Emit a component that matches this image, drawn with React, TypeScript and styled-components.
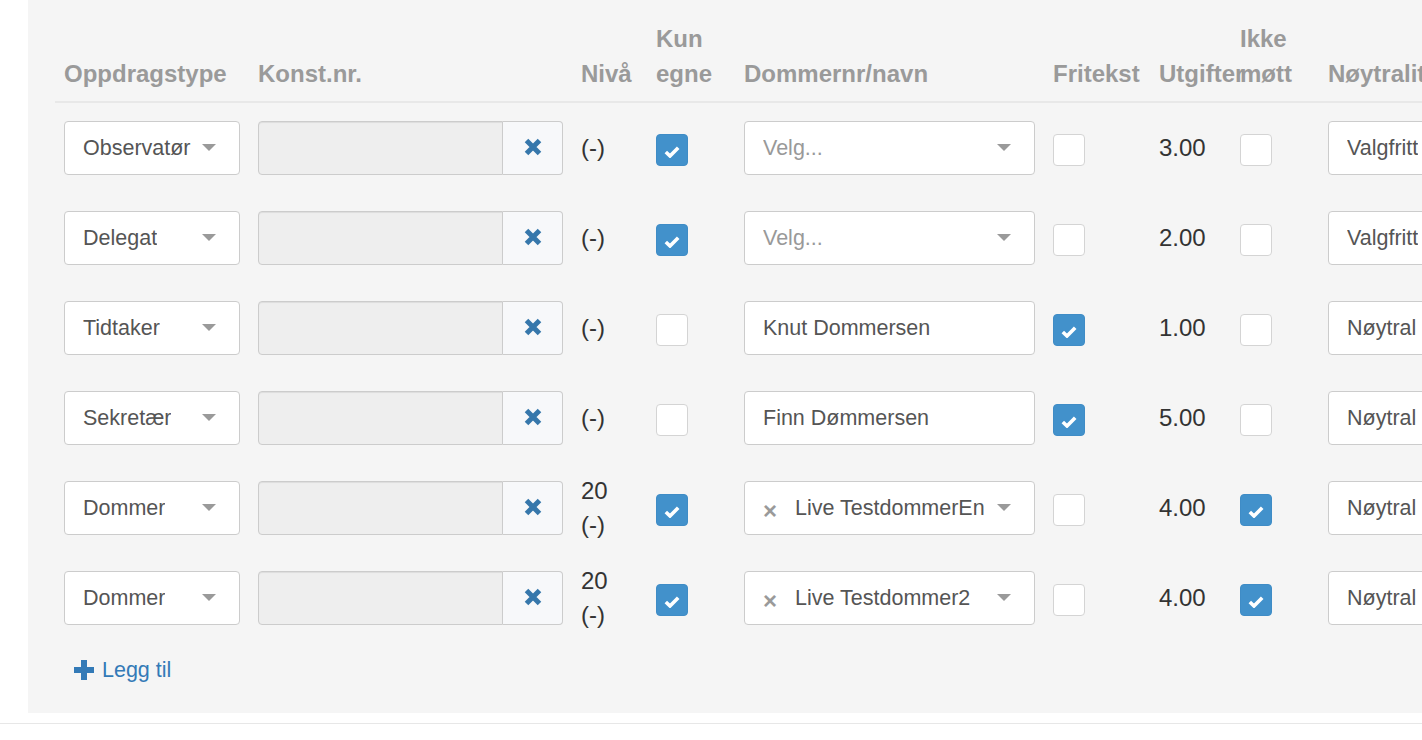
import React from "react";
import styled, { createGlobalStyle } from "styled-components";

const GlobalStyle = createGlobalStyle`
  html, body {
    margin: 0;
    padding: 0;
    background: #ffffff;
    overflow: hidden;
    font-family: "Liberation Sans", Arial, Helvetica, sans-serif;
  }
  * { box-sizing: border-box; }
`;

const Page = styled.div`
  display: flex;
  flex-direction: column;
`;

const PanelArea = styled.div`
  padding-left: 28px;
`;

const Panel = styled.div`
  background: #f5f5f5;
  padding: 11px 0 28px 27px;
  overflow: hidden;
`;

const Table = styled.table`
  border-collapse: separate;
  border-spacing: 0;
  table-layout: fixed;
  width: 1484px;
`;

const HeadCell = styled.th`
  text-align: left;
  vertical-align: bottom;
  padding: 10px 9px;
  font-size: 24px;
  font-weight: bold;
  line-height: 35px;
  color: #9a9a9a;
  border-bottom: 2px solid #e8e8e8;
  overflow: visible;
`;

const Cell = styled.td`
  padding: 18px 9px;
  vertical-align: middle;
  font-size: 24px;
  line-height: 34px;
  color: #333333;
  overflow: visible;
  white-space: nowrap;
`;

const SelectBox = styled.div`
  display: flex;
  align-items: center;
  height: 54px;
  width: 100%;
  border: 1px solid #cccccc;
  border-radius: 4px;
  background: #ffffff;
  padding: 0 23px 0 18px;
  font-size: 21.5px;
  color: #555555;
  white-space: nowrap;
  overflow: hidden;
`;

const SelectText = styled.span<{ $placeholder?: boolean }>`
  color: ${(p) => (p.$placeholder ? "#999999" : "#555555")};
  overflow: hidden;
  text-overflow: clip;
`;

const ClearMark = styled.span`
  color: #9a9a9a;
  font-weight: bold;
  font-size: 24px;
  margin-right: 18px;
  margin-top: 6px;
  line-height: 1;
`;

const Caret = styled.span`
  margin-left: auto;
  flex: none;
  width: 0;
  height: 0;
  border-left: 7px solid transparent;
  border-right: 7px solid transparent;
  border-top: 7px solid #9a9a9a;
  margin-top: -1px;
`;

const InputGroup = styled.div`
  display: flex;
  height: 54px;
  width: 100%;
`;

const GroupInput = styled.div`
  flex: 1;
  background: #eeeeee;
  border: 1px solid #cccccc;
  border-radius: 4px 0 0 4px;
  box-shadow: inset 0 1px 1px rgba(0, 0, 0, 0.075);
`;

const GroupButton = styled.div`
  width: 60px;
  flex: none;
  display: flex;
  align-items: center;
  justify-content: center;
  background: #f7f8fa;
  border: 1px solid #cccccc;
  border-left: none;
  border-radius: 0 4px 4px 0;
  padding-bottom: 3px;
`;

const CheckBox = styled.div<{ $checked: boolean }>`
  width: 32px;
  height: 32px;
  margin-top: 4px;
  border-radius: 4px;
  border: 1px solid ${(p) => (p.$checked ? "#3f8cc6" : "#d4d4d4")};
  background: ${(p) => (p.$checked ? "#4291cb" : "#ffffff")};
  display: flex;
  align-items: center;
  justify-content: center;
  padding-top: 3px;
`;

const LevelText = styled.div`
  height: 54px;
  display: flex;
  flex-direction: column;
  justify-content: center;
  overflow: visible;
`;

const AddButton = styled.button`
  align-self: flex-start;
  display: inline-flex;
  align-items: center;
  gap: 8px;
  margin: 12px 0 0 19px;
  padding: 0;
  border: none;
  background: none;
  font-family: "Liberation Sans", Arial, Helvetica, sans-serif;
  font-size: 21.5px;
  line-height: 30px;
  color: #337ab7;
  cursor: pointer;
`;

const Footer = styled.div`
  margin-top: 10px;
  border-top: 1px solid #e7e7e7;
  height: 40px;
`;

const RemoveIcon = () => (
  <svg width="18" height="18" viewBox="0 0 18 18">
    <path d="M2.5 2.5 L15.5 15.5 M15.5 2.5 L2.5 15.5" stroke="#3677ab" strokeWidth="5" strokeLinecap="butt" fill="none" />
  </svg>
);

const CheckIcon = () => (
  <svg width="16" height="12" viewBox="0 0 16 12">
    <path d="M1.8 6 L6 10 L14.2 1.8" stroke="#ffffff" strokeWidth="3.6" strokeLinecap="butt" strokeLinejoin="miter" fill="none" />
  </svg>
);

const PlusIcon = () => (
  <svg width="20" height="20" viewBox="0 0 20 20">
    <path d="M7 0 H13 V7 H20 V13 H13 V20 H7 V13 H0 V7 H7 Z" fill="#337ab7" />
  </svg>
);

type Judge = { kind: "empty" } | { kind: "text"; value: string } | { kind: "select"; value: string };

type Row = {
  type: string;
  level: string[];
  own: boolean;
  judge: Judge;
  free: boolean;
  cost: string;
  absent: boolean;
  neutral: string;
};

const rows: Row[] = [
  { type: "Observatør", level: ["(-)"], own: true, judge: { kind: "empty" }, free: false, cost: "3.00", absent: false, neutral: "Valgfritt" },
  { type: "Delegat", level: ["(-)"], own: true, judge: { kind: "empty" }, free: false, cost: "2.00", absent: false, neutral: "Valgfritt" },
  { type: "Tidtaker", level: ["(-)"], own: false, judge: { kind: "text", value: "Knut Dommersen" }, free: true, cost: "1.00", absent: false, neutral: "Nøytral" },
  { type: "Sekretær", level: ["(-)"], own: false, judge: { kind: "text", value: "Finn Dømmersen" }, free: true, cost: "5.00", absent: false, neutral: "Nøytral" },
  { type: "Dommer", level: ["20", "(-)"], own: true, judge: { kind: "select", value: "Live TestdommerEn" }, free: false, cost: "4.00", absent: true, neutral: "Nøytral" },
  { type: "Dommer", level: ["20", "(-)"], own: true, judge: { kind: "select", value: "Live Testdommer2" }, free: false, cost: "4.00", absent: true, neutral: "Nøytral" },
];

const colWidths = [194, 323, 75, 88, 309, 106, 81, 88, 220];

const Check = ({ checked }: { checked: boolean }) => (
  <CheckBox $checked={checked}>{checked && <CheckIcon />}</CheckBox>
);

const JudgeField = ({ judge }: { judge: Judge }) => {
  if (judge.kind === "text") {
    return (
      <SelectBox>
        <SelectText>{judge.value}</SelectText>
      </SelectBox>
    );
  }
  if (judge.kind === "select") {
    return (
      <SelectBox>
        <ClearMark>×</ClearMark>
        <SelectText>{judge.value}</SelectText>
        <Caret />
      </SelectBox>
    );
  }
  return (
    <SelectBox>
      <SelectText $placeholder>Velg...</SelectText>
      <Caret />
    </SelectBox>
  );
};

export default function App() {
  return (
    <>
      <GlobalStyle />
      <Page>
        <PanelArea>
          <Panel>
            <Table>
              <colgroup>
                {colWidths.map((w, i) => (
                  <col key={i} style={{ width: w }} />
                ))}
              </colgroup>
              <thead>
                <tr>
                  <HeadCell>Oppdragstype</HeadCell>
                  <HeadCell>Konst.nr.</HeadCell>
                  <HeadCell>Nivå</HeadCell>
                  <HeadCell>Kun egne</HeadCell>
                  <HeadCell>Dommernr/navn</HeadCell>
                  <HeadCell>Fritekst</HeadCell>
                  <HeadCell>Utgifter</HeadCell>
                  <HeadCell>Ikke møtt</HeadCell>
                  <HeadCell>Nøytralitet</HeadCell>
                </tr>
              </thead>
              <tbody>
                {rows.map((r, i) => (
                  <tr key={i}>
                    <Cell>
                      <SelectBox>
                        <SelectText>{r.type}</SelectText>
                        <Caret />
                      </SelectBox>
                    </Cell>
                    <Cell>
                      <InputGroup>
                        <GroupInput />
                        <GroupButton>
                          <RemoveIcon />
                        </GroupButton>
                      </InputGroup>
                    </Cell>
                    <Cell>
                      <LevelText>
                        {r.level.map((l, j) => (
                          <span key={j}>{l}</span>
                        ))}
                      </LevelText>
                    </Cell>
                    <Cell>
                      <Check checked={r.own} />
                    </Cell>
                    <Cell>
                      <JudgeField judge={r.judge} />
                    </Cell>
                    <Cell>
                      <Check checked={r.free} />
                    </Cell>
                    <Cell>{r.cost}</Cell>
                    <Cell>
                      <Check checked={r.absent} />
                    </Cell>
                    <Cell>
                      <SelectBox>
                        <SelectText>{r.neutral}</SelectText>
                        <Caret />
                      </SelectBox>
                    </Cell>
                  </tr>
                ))}
              </tbody>
            </Table>
            <AddButton type="button">
              <PlusIcon />
              Legg til
            </AddButton>
          </Panel>
        </PanelArea>
        <Footer />
      </Page>
    </>
  );
}
